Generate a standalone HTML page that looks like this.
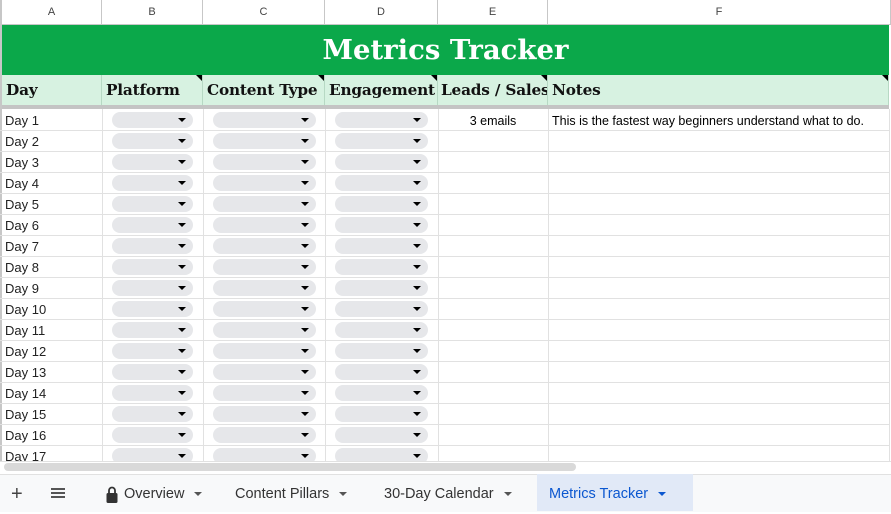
<!DOCTYPE html><html><head><style>
body{margin:0;width:891px;height:511px;overflow:hidden;background:#fff;font-family:"Liberation Sans",sans-serif;position:relative}
.a{position:absolute}
.colh{top:0;height:25px;border-right:1px solid #c7c7c7;border-bottom:1px solid #c7c7c7;background:#fff;font-size:11px;color:#444;text-align:center;line-height:25px;box-sizing:border-box}
.hd{top:75px;height:30px;background:#d7f2e1;border-right:1px solid #b7d9c4;box-sizing:border-box;font-family:"DejaVu Serif",serif;font-weight:bold;font-size:15.3px;line-height:30px;padding-left:4px;color:#111;overflow:hidden;white-space:nowrap;letter-spacing:-0.2px}
.tri{position:absolute;right:0;top:0;width:0;height:0;border-left:6px solid transparent;border-top:6px solid #000}
.row{left:0;width:889px;height:21px;border-bottom:1px solid #e1e1e1;box-sizing:border-box;font-size:13px;line-height:22px}
.chip{position:absolute;top:2px;height:16px;border-radius:8px;background:#e6e7ea}
.chip:after{content:"";position:absolute;right:7px;top:6px;border-left:4px solid transparent;border-right:4px solid transparent;border-top:4px solid #000}
.vl{top:109px;height:352px;width:1px;background:#e1e1e1}
.tab{top:474px;height:37px;line-height:40px;font-size:14.5px;color:#333}
.dd{display:inline-block;margin-left:10px;border-left:4px solid transparent;border-right:4px solid transparent;border-top:4px solid #555;vertical-align:middle}
</style></head><body>
<div class="a colh" style="left:0;width:102px;border-left:2px solid #c7c7c7">A</div>
<div class="a colh" style="left:102px;width:101px">B</div>
<div class="a colh" style="left:203px;width:122px">C</div>
<div class="a colh" style="left:325px;width:113px">D</div>
<div class="a colh" style="left:438px;width:110px">E</div>
<div class="a colh" style="left:548px;width:343px">F</div>
<div class="a" style="left:2px;top:25px;width:887px;height:50px;background:#0ba84a;color:#fff;font-family:'DejaVu Serif',serif;font-weight:bold;font-size:27.5px;text-align:center;line-height:50px">Metrics Tracker</div>
<div class="a hd" style="left:2px;width:100px">Day</div>
<div class="a hd" style="left:102px;width:101px">Platform<span class="tri"></span></div>
<div class="a hd" style="left:203px;width:122px">Content Type<span class="tri"></span></div>
<div class="a hd" style="left:325px;width:113px">Engagement<span class="tri"></span></div>
<div class="a hd" style="left:438px;width:110px;padding-left:3px">Leads / Sales<span class="tri"></span></div>
<div class="a hd" style="left:548px;width:341px">Notes<span class="tri"></span></div>
<div class="a" style="left:0;top:105px;width:889px;height:4px;background:#c4c4c4"></div>
<div class="a" style="left:0;top:0;width:2px;height:461px;background:#c7c7c7"></div>
<div class="a vl" style="left:102px"></div><div class="a vl" style="left:203px"></div><div class="a vl" style="left:325px"></div><div class="a vl" style="left:438px"></div><div class="a vl" style="left:548px"></div><div class="a vl" style="left:889px"></div>
<div id="rows"></div>
<div class="a" style="left:0;top:461px;width:891px;height:13px;background:#fff;border-top:1px solid #e1e1e1"></div>
<div class="a" style="left:4px;top:463px;width:572px;height:8px;border-radius:4px;background:#d9d9d9"></div>
<div class="a" style="left:0;top:474px;width:891px;height:37px;background:#f8f9fa;border-top:1px solid #e1e1e1"></div>
<div class="a tab" style="left:11px;font-size:20px;color:#444">+</div>
<div class="a" style="left:51px;top:488px;width:14px;height:2px;background:#555;box-shadow:0 4px 0 #555,0 8px 0 #555"></div>
<div class="a" style="left:106px;top:486px"><svg width="12" height="17" viewBox="0 0 12 17"><path d="M3 7V4.5a3 3 0 0 1 6 0V7" fill="none" stroke="#333" stroke-width="1.8"/><rect x="0.5" y="7" width="11" height="10" rx="1.5" fill="#333"/></svg></div>
<div class="a tab" style="left:124px">Overview<span class="dd"></span></div>
<div class="a tab" style="left:235px">Content Pillars<span class="dd"></span></div>
<div class="a tab" style="left:384px">30-Day Calendar<span class="dd"></span></div>
<div class="a tab" style="left:537px;width:156px;background:#e1e9f7;color:#0b57d0;font-weight:500;padding-left:12px;box-sizing:border-box">Metrics Tracker<span class="dd" style="border-top-color:#0b57d0"></span></div>
<script>
var h='';for(var i=1;i<=17;i++){var t=110+(i-1)*21;
h+='<div class="a row" style="top:'+t+'px"><span class="a" style="left:5px;color:#222">Day '+i+'</span><span class="chip" style="left:112px;width:81px"></span><span class="chip" style="left:213px;width:103px"></span><span class="chip" style="left:335px;width:93px"></span>'+(i==1?'<span class="a" style="left:438px;width:110px;text-align:center;font-size:12.5px">3 emails</span><span class="a" style="left:552px;font-size:12.5px">This is the fastest way beginners understand what to do.</span>':'')+'</div>';}
document.getElementById('rows').innerHTML=h;
</script>
</body></html>
